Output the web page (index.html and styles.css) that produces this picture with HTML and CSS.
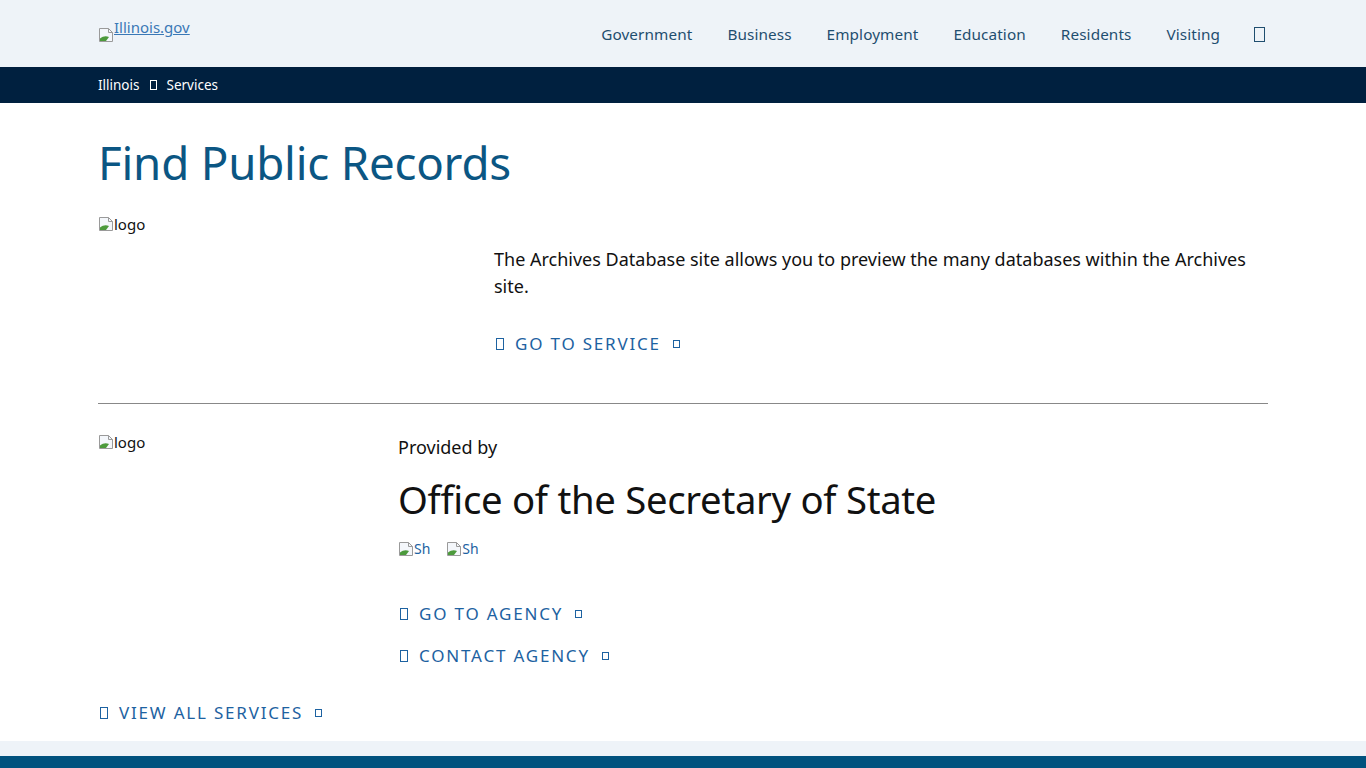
FILE: index.html
```html
<!DOCTYPE html>
<html lang="en">
<head>
	<title>Find Public Records</title>
	<meta name="viewport" content="width=device-width, initial-scale=1">
	<link rel="stylesheet" href="styles.css">
</head>
<body>

	<header class="site-header">
		<div class="container header-inner">
			<a class="brand" href="#">
				<svg class="broken-icon" width="16" height="16" viewBox="0 0 16 16"><path d="M1.5 1.5h9l4 4v9h-13z" fill="#f4f7fb" stroke="#9a9a9a"/><path d="M10.5 1.5v4h4" fill="none" stroke="#9a9a9a"/><path d="M2 14v-2.5c3-2.5 6-3 9-1.5l-3 4z" fill="#4c9a3c"/></svg><span class="brand-text">Illinois.gov</span>
			</a>
			<nav class="main-nav">
				<a href="#">Government</a>
				<a href="#">Business</a>
				<a href="#">Employment</a>
				<a href="#">Education</a>
				<a href="#">Residents</a>
				<a href="#">Visiting</a>
				<span class="tofu search"></span>
			</nav>
		</div>
	</header>

	<div class="breadcrumb">
		<div class="container">
			<a href="#">Illinois</a>
			<span class="tofu small"></span>
			<span>Services</span>
		</div>
	</div>

	<main class="container">
		<h1>Find Public Records</h1>

		<section class="service">
			<div class="service-logo">
				<span class="alt"><svg class="broken-icon" width="16" height="16" viewBox="0 0 16 16"><path d="M1.5 1.5h9l4 4v9h-13z" fill="#f4f7fb" stroke="#9a9a9a"/><path d="M10.5 1.5v4h4" fill="none" stroke="#9a9a9a"/><path d="M2 14v-2.5c3-2.5 6-3 9-1.5l-3 4z" fill="#4c9a3c"/></svg>logo</span>
			</div>
			<div class="service-body">
				<p>The Archives Database site allows you to preview the many databases within the Archives site.</p>
				<a class="action" href="#"><span class="tofu"></span>Go to Service<span class="tofu after"></span></a>
			</div>
		</section>

		<hr>

		<section class="agency">
			<div class="agency-logo">
				<span class="alt"><svg class="broken-icon" width="16" height="16" viewBox="0 0 16 16"><path d="M1.5 1.5h9l4 4v9h-13z" fill="#f4f7fb" stroke="#9a9a9a"/><path d="M10.5 1.5v4h4" fill="none" stroke="#9a9a9a"/><path d="M2 14v-2.5c3-2.5 6-3 9-1.5l-3 4z" fill="#4c9a3c"/></svg>logo</span>
			</div>
			<div class="agency-body">
				<p class="provided">Provided by</p>
				<h2>Office of the Secretary of State</h2>
				<div class="social">
					<a class="alt share" href="#"><svg class="broken-icon" width="16" height="16" viewBox="0 0 16 16"><path d="M1.5 1.5h9l4 4v9h-13z" fill="#f4f7fb" stroke="#9a9a9a"/><path d="M10.5 1.5v4h4" fill="none" stroke="#9a9a9a"/><path d="M2 14v-2.5c3-2.5 6-3 9-1.5l-3 4z" fill="#4c9a3c"/></svg>Sh</a>
					<a class="alt share" href="#"><svg class="broken-icon" width="16" height="16" viewBox="0 0 16 16"><path d="M1.5 1.5h9l4 4v9h-13z" fill="#f4f7fb" stroke="#9a9a9a"/><path d="M10.5 1.5v4h4" fill="none" stroke="#9a9a9a"/><path d="M2 14v-2.5c3-2.5 6-3 9-1.5l-3 4z" fill="#4c9a3c"/></svg>Sh</a>
				</div>
				<ul class="actions">
					<li><a class="action" href="#"><span class="tofu"></span>Go to Agency<span class="tofu after"></span></a></li>
					<li><a class="action" href="#"><span class="tofu"></span>Contact Agency<span class="tofu after"></span></a></li>
				</ul>
			</div>
		</section>

		<a class="action view-all" href="#"><span class="tofu"></span>View all Services<span class="tofu after"></span></a>
	</main>

	<footer class="site-footer">
		<div class="footer-band"></div>
		<div class="footer-main"></div>
	</footer>
</body>
</html>
```

FILE: styles.css
```css
html,
body {
	padding: 0;
	margin: 0;
}

:root {
	--header-bg: #eef3f8;
	--navy: #00203f;
	--title: #0b5683;
	--nav: #1f4e6f;
	--link: #1d62a1;
	--text: #111;
	--font: "Noto Sans", "Open Sans", sans-serif;
}

body {
	font: 16px var(--font);
	color: var(--text);
	background: #fff;
}

a { text-decoration: none; color: inherit; }

.container {
	width: 1170px;
	margin: 0 auto;
}

.tofu {
	display: inline-block;
	box-sizing: border-box;
	width: 8px;
	height: 12px;
	border: 1px solid currentColor;
	vertical-align: -1px;
}
.tofu.small { width: 7px; height: 10px; }
.tofu.after { width: 7px; height: 8px; vertical-align: 2px; }

.broken-icon { flex: none; }

/* header */
.site-header { background: var(--header-bg); height: 67px; }
.header-inner {
	display: flex;
	align-items: center;
	justify-content: space-between;
	height: 67px;
}

.brand {
	align-self: flex-start;
	display: flex;
	align-items: flex-start;
	margin-top: 19px;
	color: #3a78b6;
	font-size: 15px;
	line-height: 16px;
}
.brand .broken-icon { margin-top: 8px; }
.brand-text { text-decoration: underline; }

.main-nav {
	display: flex;
	align-items: center;
	gap: 35px;
	padding-top: 1px;
	color: var(--nav);
	font-size: 15.3px;
	letter-spacing: 0.1px;
}
.main-nav .search { width: 11px; height: 15px; margin-left: -1px; margin-right: 3px; }

/* breadcrumb */
.breadcrumb {
	background: var(--navy);
	color: #fff;
	height: 36px;
	font-size: 13.5px;
}
.breadcrumb .container {
	display: flex;
	align-items: center;
	gap: 10px;
	height: 36px;
}

/* content */
h1 {
	margin: 30px 0 26px;
	color: var(--title);
	font-size: 45.7px;
	font-weight: 400;
	line-height: 58px;
	letter-spacing: -0.2px;
}

.alt {
	display: inline-flex;
	align-items: flex-start;
	font-size: 15px;
	line-height: 16px;
	color: var(--text);
}

.service {
	display: grid;
	grid-template-columns: 396px 1fr;
}
.service-logo { margin-top: -2px; }
.service-body { padding-top: 29px; }
.service-body p {
	margin: 0 0 30px;
	font-size: 18px;
	line-height: 27px;
}

.action {
	display: inline-flex;
	align-items: center;
	gap: 11px;
	color: var(--link);
	font-size: 17px;
	line-height: 28px;
	letter-spacing: 1.8px;
	text-transform: uppercase;
}
.action .tofu:first-child { margin-left: 2px; }
.action .after { margin-left: 1px; }

hr {
	margin: 45px 0 29px;
	border: 0;
	border-top: 1px solid #888;
}

.agency {
	display: grid;
	grid-template-columns: 300px 1fr;
}
.agency-logo { margin-top: 0; }
.agency-body .provided {
	margin: 0;
	font-size: 18px;
	line-height: 28px;
}
.agency-body h2 {
	margin: 14px 0 18px;
	font-size: 38.3px;
	font-weight: 400;
	line-height: 48px;
	letter-spacing: -0.3px;
}

.social { display: flex; gap: 16px; }
.share {
	color: var(--link);
	font-size: 14px;
}

.actions {
	margin: 43px 0 0;
	padding: 0;
	list-style: none;
	display: flex;
	flex-direction: column;
	gap: 14px;
}

.view-all { margin: 29px 0 14px; }

/* footer */
.footer-band { height: 15px; background: var(--header-bg); }
.footer-main { height: 40px; background: #00527e; }
```
